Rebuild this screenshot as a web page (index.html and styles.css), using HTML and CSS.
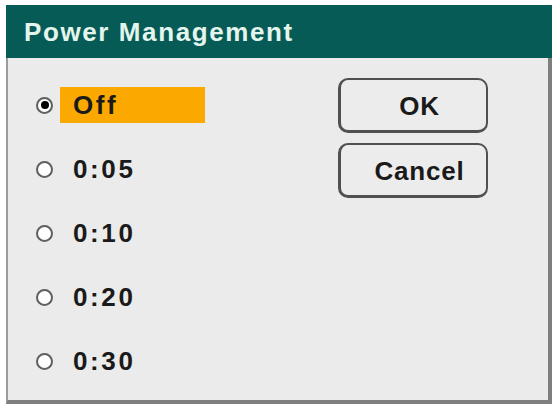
FILE: index.html
```html
<!DOCTYPE html>
<html>
<head>
<meta charset="utf-8">
<link rel="stylesheet" href="styles.css">
</head>
<body>
<div class="dialog">
  <div class="titlebar">Power Management</div>
  <div class="panel">
    <div class="options">
      <div class="row">
        <span class="radio checked"></span>
        <span class="label selected">Off</span>
      </div>
      <div class="row">
        <span class="radio"></span>
        <span class="label">0:05</span>
      </div>
      <div class="row">
        <span class="radio"></span>
        <span class="label">0:10</span>
      </div>
      <div class="row">
        <span class="radio"></span>
        <span class="label">0:20</span>
      </div>
      <div class="row">
        <span class="radio"></span>
        <span class="label">0:30</span>
      </div>
    </div>
    <div class="buttons">
      <div class="btn">OK</div>
      <div class="btn">Cancel</div>
    </div>
  </div>
</div>
</body>
</html>
```
FILE: styles.css
```css
html, body {
  margin: 0;
  padding: 0;
  background: #ffffff;
}
body {
  padding: 5px 0 0 6px;
  font-family: "Liberation Sans", Arial, sans-serif;
}
.dialog {
  width: 546px;
  display: flex;
  flex-direction: column;
}
.titlebar {
  height: 53px;
  background: #075b56;
  color: #e4f5ee;
  font-weight: bold;
  font-size: 26px;
  letter-spacing: 1.6px;
  line-height: 55px;
  padding-left: 18px;
  box-sizing: border-box;
}
.panel {
  height: 346px;
  box-sizing: border-box;
  background: #ebebeb;
  border-left: 2px solid #9c9c9c;
  border-right: 4px solid #7e7e7e;
  border-bottom: 4px solid #7e7e7e;
  display: grid;
  grid-template-columns: 169px 150px;
  column-gap: 133px;
  padding: 20px 0 0 28px;
  align-items: start;
}
.options {
  display: flex;
  flex-direction: column;
  gap: 28px;
  padding-top: 9px;
}
.row {
  display: flex;
  align-items: center;
  gap: 7px;
  height: 36px;
}
.radio {
  width: 17px;
  height: 17px;
  box-sizing: border-box;
  border-radius: 50%;
  border: 2px solid #5e5e5e;
  background: #ffffff;
  display: flex;
  align-items: center;
  justify-content: center;
  flex: none;
}
.radio.checked::after {
  content: "";
  width: 8px;
  height: 8px;
  border-radius: 50%;
  background: #000000;
}
.label {
  width: 145px;
  height: 36px;
  box-sizing: border-box;
  padding-left: 13px;
  line-height: 37px;
  font-weight: bold;
  font-size: 26px;
  letter-spacing: 2.6px;
  color: #1a1a1a;
}
.label.selected {
  background: #fba900;
}
.buttons {
  display: flex;
  flex-direction: column;
  gap: 10px;
}
.btn {
  height: 55px;
  box-sizing: border-box;
  border-style: solid;
  border-color: #505050;
  border-width: 2px 2px 3px 3px;
  border-radius: 10px;
  background: #ececec;
  display: flex;
  align-items: center;
  justify-content: center;
  font-weight: bold;
  font-size: 26px;
  letter-spacing: 0.8px;
  color: #1a1a1a;
  padding: 2px 0 0 12px;
}
```
